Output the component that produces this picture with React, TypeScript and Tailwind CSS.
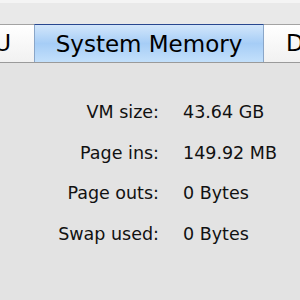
export default function App() {
  const rows: [string, string][] = [
    ["VM size:", "43.64 GB"],
    ["Page ins:", "149.92 MB"],
    ["Page outs:", "0 Bytes"],
    ["Swap used:", "0 Bytes"],
  ];

  return (
    <div className="w-[300px] h-[300px] overflow-hidden bg-[#e3e3e3] text-black font-['DejaVu_Sans',sans-serif]">
      <div className="h-[24px] border-t-[3px] border-[#f4f4f4] bg-[#e9e9e9]" />
      <div className="flex h-[39px] border-b border-[#9a9a9a] text-[23px] leading-none">
        <div className="flex w-[34px] shrink-0 items-center justify-end overflow-hidden whitespace-nowrap border-t border-[#a3a3a3] bg-gradient-to-b from-[#ffffff] to-[#f1f1f1] pr-[23px]">
          CPU
        </div>
        <div className="flex w-[230px] shrink-0 items-center justify-center border-x border-t border-x-[#8aa6c8] border-t-[#28478f] bg-gradient-to-b from-[#d2e6fb] via-[#a6cdf6] to-[#c3e0fb] pt-[1px]">
          System Memory
        </div>
        <div className="flex flex-1 items-center overflow-hidden whitespace-nowrap border-t border-[#a3a3a3] bg-gradient-to-b from-[#ffffff] to-[#f1f1f1] pl-[22px]">
          Disk Activity
        </div>
      </div>
      <div className="grid grid-cols-[159px_1fr] gap-x-[24px] gap-y-[19.5px] pt-[39px] text-[17.5px] leading-[21px] text-[#111]">
        {rows.map(([k, v]) => (
          <div key={k} className="contents">
            <span className="text-right">{k}</span>
            <span>{v}</span>
          </div>
        ))}
      </div>
    </div>
  );
}
